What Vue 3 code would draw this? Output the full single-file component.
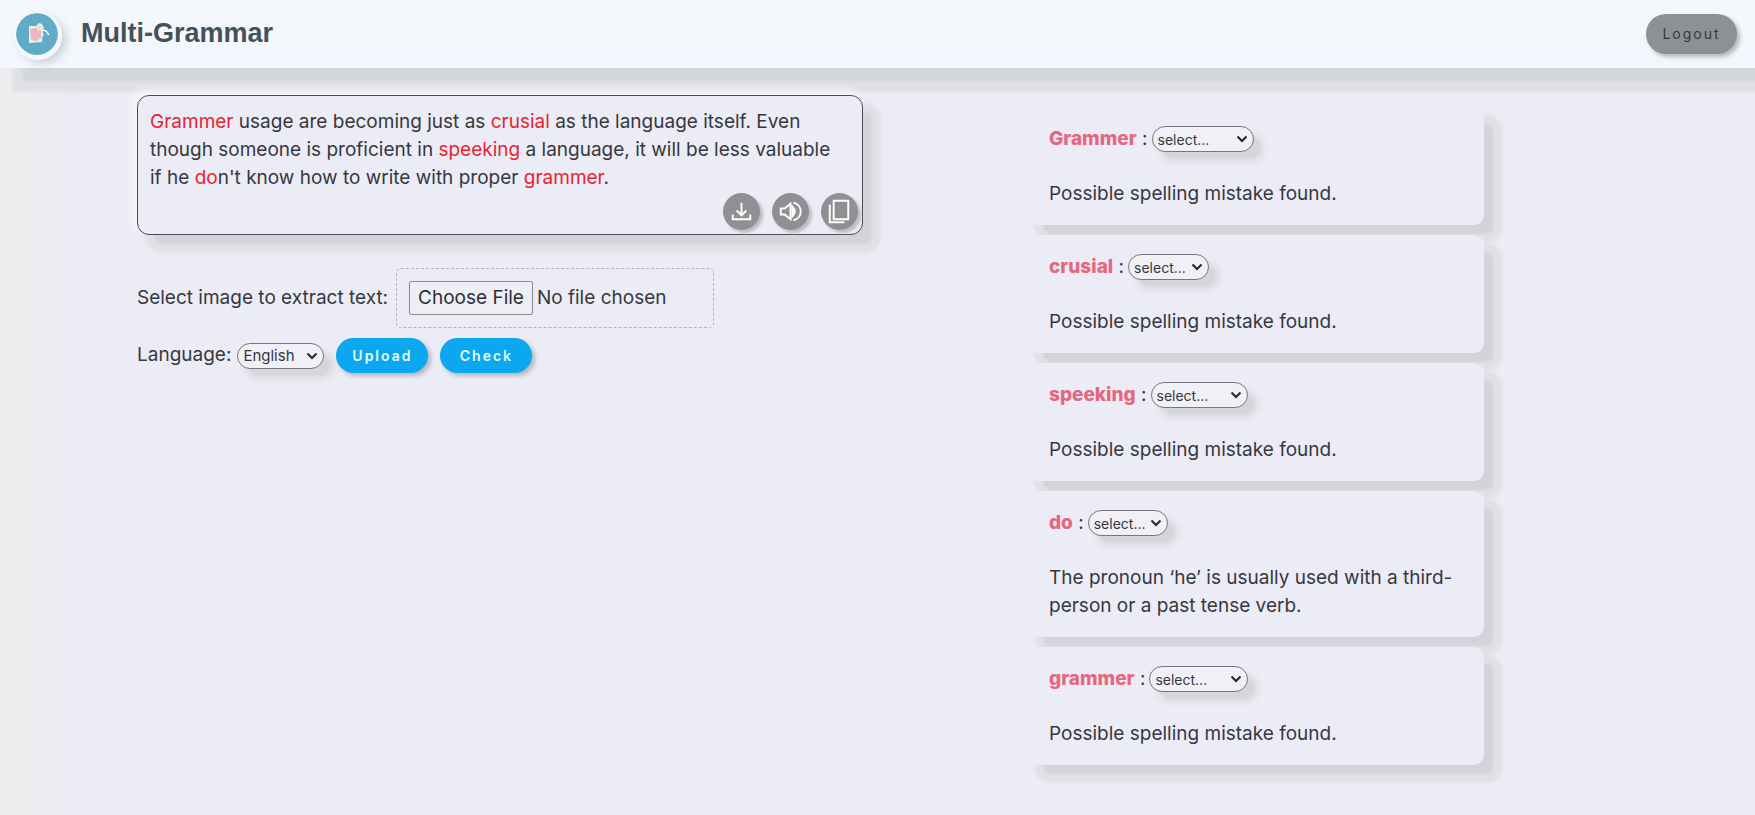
<script setup>
import { ref } from 'vue'

const language = ref('English')

const passage = [
  { text: 'Grammer', wrong: true },
  { text: ' usage are becoming just as ' },
  { text: 'crusial', wrong: true },
  { text: ' as the language itself. Even though someone is proficient in ' },
  { text: 'speeking', wrong: true },
  { text: ' a language, it will be less valuable if he ' },
  { text: 'do', wrong: true },
  { text: "n't know how to write with proper " },
  { text: 'grammer', wrong: true },
  { text: '.' },
]

const spelling = 'Possible spelling mistake found.'
const issues = [
  { word: 'Grammer', width: 102, message: spelling },
  { word: 'crusial', width: 81, message: spelling },
  { word: 'speeking', width: 97, message: spelling },
  { word: 'do', width: 80, message: 'The pronoun ‘he’ is usually used with a third-person or a past tense verb.' },
  { word: 'grammer', width: 99, message: spelling },
]
</script>

<template>
  <div class="page">
    <header class="topbar">
      <a class="brand" href="#">
        <svg class="logo" viewBox="0 0 42 42" aria-hidden="true">
          <circle cx="21" cy="21" r="21" fill="#62abc6" />
          <path d="M13 13h7l3-3 3 1 2 4-1 2-1 12-13 1z" fill="#e4f1f5" />
          <path d="M14 16l6-1 5 3v7l-5 3-5-1z" fill="#eeb6bd" />
          <path d="M19 14l4-3 4 4-5 3z" fill="#f3dcd6" />
          <path d="M26 17l4 1 3 4M25 21l3 1" fill="none" stroke="#eaf7fa" stroke-width="1.5" />
        </svg>
        <span class="title">Multi-Grammar</span>
      </a>
      <button class="pill logout" type="button">Logout</button>
    </header>

    <main class="content">
      <section class="editor">
        <div class="passage">
          <p class="passage-text"><template v-for="(part, i) in passage" :key="i"><span v-if="part.wrong" class="wrong">{{ part.text }}</span><template v-else>{{ part.text }}</template></template></p>
          <div class="actions">
            <button class="round" type="button" aria-label="Download">
              <svg viewBox="0 0 38 38"><path d="M19 10v12M14 18l5 5 5-5M10 22v5h18v-5" /></svg>
            </button>
            <button class="round" type="button" aria-label="Listen">
              <svg viewBox="0 0 38 38">
                <path d="M9 16h4l6-5v16l-6-5H9z" />
                <path d="M21 14q5 5 0 10z" fill="#fff" />
                <path d="M22 10c10 2 10 16 0 18" />
              </svg>
            </button>
            <button class="round" type="button" aria-label="Copy">
              <svg viewBox="0 0 38 38"><path d="M13 8h15v19H13zM9 12v18h15" /></svg>
            </button>
          </div>
        </div>

        <div class="row file-row">
          <label for="image">Select image to extract text:</label>
          <input id="image" class="file" type="file" />
        </div>
        <div class="row tools">
          <label for="language">Language:</label>
          <select id="language" v-model="language" class="picker language">
            <option>English</option>
          </select>
          <button class="pill primary" type="button">Upload</button>
          <button class="pill primary" type="button">Check</button>
        </div>
      </section>

      <section class="issues">
        <article v-for="(issue, i) in issues" :key="i" class="issue">
          <div class="issue-head">
            <label :for="'fix-' + i"><strong>{{ issue.word }}</strong> :</label>
            <select :id="'fix-' + i" class="picker" :style="{ width: issue.width + 'px' }">
              <option>select...</option>
            </select>
          </div>
          <p class="message">{{ issue.message }}</p>
        </article>
      </section>
    </main>
  </div>
</template>

<style>
body {
  margin: 0;
  background: #ebecf5;
}
</style>

<style scoped>
.page {
  box-sizing: border-box;
  min-height: 100vh;
  overflow: hidden;
  background: linear-gradient(90deg, #eeeeef 0, #eeeeef 20px, #ebecf5 76px);
  color: #363840;
  font: 19px/28px Inter, sans-serif;
}
button,
select,
input {
  font-family: inherit;
  color: inherit;
}
.topbar {
  display: flex;
  align-items: center;
  justify-content: space-between;
  box-sizing: border-box;
  height: 68px;
  padding: 0 18px 0 16px;
  background: linear-gradient(180deg, #f4f8fa, #f3f7fe);
  box-shadow: 18px 18px 3px -5px #d2d5db, 18px 18px 3px 6px #e0e1e7;
}
.brand {
  display: flex;
  align-items: center;
  gap: 23px;
  color: #44515a;
  text-decoration: none;
}
.logo {
  width: 42px;
  height: 42px;
  border-radius: 50%;
  box-shadow: 1px 2px 0 3px #f5f9fc, 6px 6px 10px 2px #c8ced4;
}
.title {
  padding-bottom: 2px;
  font: bold 27px/32px "Liberation Sans", sans-serif;
}
.pill {
  border: 0;
  border-radius: 20px;
  font-size: 14px;
  letter-spacing: 2px;
  box-shadow: 3px 3px 4px #b4b8be;
}
.logout {
  width: 91px;
  height: 40px;
  padding: 0 0 2px;
  background: #8d9194;
  color: #35393d;
}
.content {
  display: grid;
  grid-template-columns: 137fr 726fr 164fr 457fr 271fr;
  align-items: start;
}
.editor {
  grid-column: 2;
  padding-top: 27px;
}
.passage {
  border: 1px solid #484a54;
  border-radius: 12px;
  background: #ebecf5;
  box-shadow: -5px -5px 8px rgba(255, 255, 255, 0.6), 13px 13px 3px -4px #d3d4da, 13px 13px 3px 5px #e0e1e6;
}
.passage-text {
  margin: 0;
  padding: 12px 26px 0 12px;
}
.wrong {
  color: #ea2234;
}
.actions {
  display: flex;
  justify-content: flex-end;
  gap: 12px;
  padding: 1px 4px 4px;
}
.round {
  width: 37px;
  height: 37px;
  padding: 0;
  border: 0;
  border-radius: 50%;
  background: #8e9093;
  box-shadow: 3px 3px 3px #bcbec4;
}
.round svg {
  display: block;
  width: 37px;
  height: 37px;
  fill: none;
  stroke: #fff;
  stroke-width: 2;
}
.row {
  display: flex;
  align-items: center;
}
.file-row {
  gap: 8px;
  margin: 33px 0 10px;
}
.tools {
  align-items: baseline;
}
.file {
  box-sizing: border-box;
  width: 318px;
  padding: 12px;
  border: 1px dashed #b4b5bc;
  border-radius: 5px;
  font-size: 19px;
  line-height: 28px;
}
.file::file-selector-button {
  height: 34px;
  margin: 0 4px 0 0;
  padding: 0 8px;
  border: 1px solid #8a8b92;
  border-radius: 2px;
  background: #eeeef5;
  color: #2c2e35;
  font: inherit;
}
.picker {
  appearance: none;
  box-sizing: border-box;
  height: 26px;
  padding: 0 0 0 5px;
  border: 1px solid #75767e;
  border-radius: 13px;
  background: #f0f0f6 url("data:image/svg+xml,%3Csvg xmlns='http://www.w3.org/2000/svg' width='12' height='8'%3E%3Cpath d='M1.5 1.5L6 6l4.5-4.5' fill='none' stroke='%2325262c' stroke-width='2'/%3E%3C/svg%3E") no-repeat right 5px center;
  font-size: 14px;
  box-shadow: 9px 9px 3px -2px #d5d6dc, 9px 9px 4px 3px #e2e3e8;
}
.language {
  width: 87px;
  margin: 0 12px 0 6px;
  font-size: 15px;
}
.primary {
  width: 92px;
  height: 35px;
  margin-right: 12px;
  padding: 0;
  background: #0ba7ef;
  color: #e4fbff;
  font-weight: 600;
}
.issues {
  grid-column: 4;
  display: grid;
  gap: 10px;
  padding-top: 39px;
}
.issue {
  padding: 18px 22px 17px;
  border-radius: 10px;
  background: #ebecf5;
  box-shadow: 13px 13px 3px -4px #d3d4da, 13px 13px 3px 5px #e0e1e6;
}
.issue-head {
  display: flex;
  align-items: center;
  gap: 4px;
}
strong {
  color: #e5677e;
  font-weight: 800;
}
.message {
  margin: 27px 0 0;
}
</style>
